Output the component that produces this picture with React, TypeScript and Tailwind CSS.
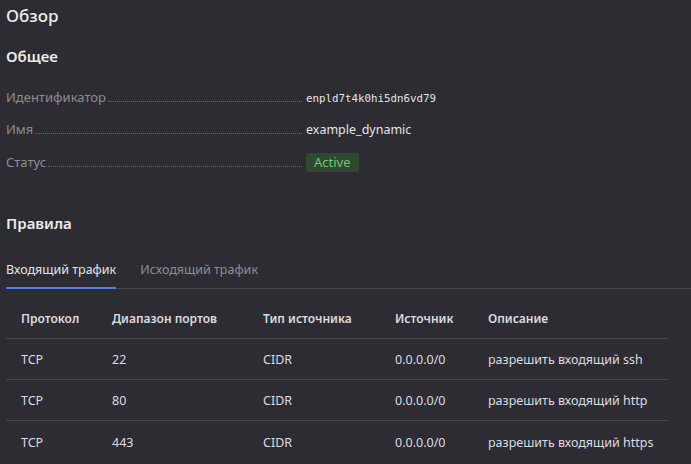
import React from "react";

const font = { fontFamily: '"Noto Sans", "Open Sans", sans-serif' };

function InfoRow({ label, children, tall }: { label: string; children: React.ReactNode; tall?: boolean }) {
  return (
    <div className={`flex items-center ${tall ? "h-[34px]" : "h-[32px]"}`}>
      <div className="flex items-baseline">
        <div className="flex w-[296px] items-baseline">
          <span className="text-[13px] text-[#8e8d94]">{label}</span>
          <div className="ml-[2px] mb-[1px] flex-1 border-b border-dotted border-[#66656c]" />
        </div>
        <div className="ml-[4px]">{children}</div>
      </div>
    </div>
  );
}

const cols = ["w-[91px]", "w-[151px]", "w-[132px]", "w-[93px]", "w-[195px]"];
const headers = ["Протокол", "Диапазон портов", "Тип источника", "Источник", "Описание"];
const rows = [
  ["TCP", "22", "CIDR", "0.0.0.0/0", "разрешить входящий ssh"],
  ["TCP", "80", "CIDR", "0.0.0.0/0", "разрешить входящий http"],
  ["TCP", "443", "CIDR", "0.0.0.0/0", "разрешить входящий https"],
];

export default function App() {
  return (
    <div className="min-h-[464px] w-full bg-[#2d2c33] px-[6px] text-[#e4e4e7]" style={font}>
      <div className="flex h-[32px] items-center text-[17px] font-medium text-[#ececee]">Обзор</div>
      <div className="mt-[11px] flex h-[26px] items-center text-[15px] font-semibold text-[#ececee]">Общее</div>
      <div className="mt-[11px]">
        <InfoRow label="Идентификатор">
          <span className="text-[10.8px] text-[#e4e4e7]" style={{ fontFamily: '"DejaVu Sans Mono", monospace' }}>
            enpld7t4k0hi5dn6vd79
          </span>
        </InfoRow>
        <InfoRow label="Имя">
          <span className="text-[12.5px] text-[#e4e4e7]">example_dynamic</span>
        </InfoRow>
        <InfoRow label="Статус" tall>
          <span className="inline-flex h-[19px] items-center rounded-[3px] bg-[#30482f] px-[8px] text-[13px] text-[#74c479]">
            Active
          </span>
        </InfoRow>
      </div>
      <div className="mt-[33px] flex h-[24px] items-center text-[15px] font-semibold text-[#ececee]">Правила</div>
      <div className="mt-[17px] -mr-[6px] flex h-[37px] gap-[24px] border-b border-[#46454c]">
        <div className="relative flex items-center text-[12.5px] text-[#e4e4e7]">
          Входящий трафик
          <div className="absolute bottom-[-1px] left-0 right-0 h-[2px] bg-[#4f7ef0]" />
        </div>
        <div className="flex items-center text-[12.5px] text-[#8e8d94]">Исходящий трафик</div>
      </div>
      <div className="mt-[10px] w-[662px]">
        <div className="flex h-[40px] items-center border-b border-[#46454c] pt-[1px]">
          {headers.map((h, i) => (
            <div key={h} className={`${cols[i]} pl-[15px] text-[12px] font-semibold text-[#dcdce0]`}>
              {h}
            </div>
          ))}
        </div>
        {rows.map((r, ri) => (
          <div
            key={ri}
            className={`flex h-[41px] items-center pt-[3px] ${ri < rows.length - 1 ? "border-b border-[#46454c]" : ""}`}
          >
            {r.map((c, i) => (
              <div key={i} className={`${cols[i]} pl-[15px] text-[12.5px] text-[#dcdce0]`}>
                {c}
              </div>
            ))}
          </div>
        ))}
      </div>
    </div>
  );
}
